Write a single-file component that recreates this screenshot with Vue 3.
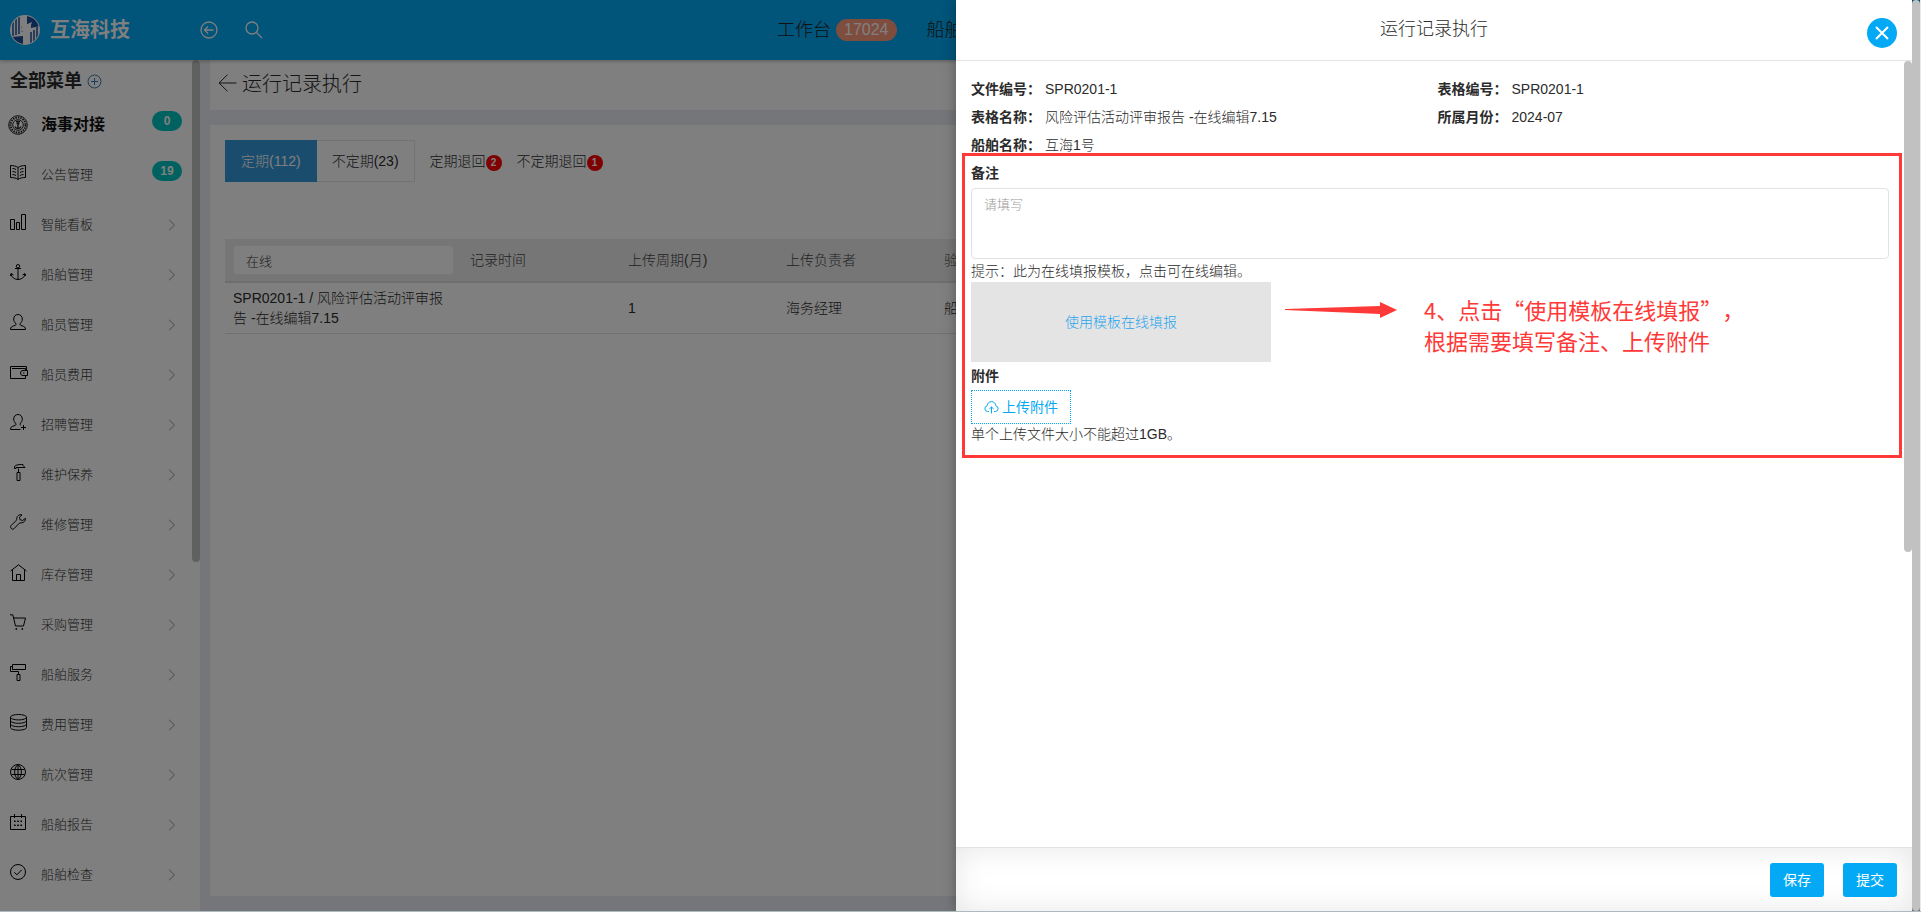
<script setup>
import { ref } from 'vue'

const icons = {
  book: 'M8 3.5C6 2 3 1.5.5 1.5v12c3 0 6 .5 7.500 2C9.500 14 12.500 13.500 15.500 13.500v-12C13 1.500 10 2 8 3.500zM8 3.500v12M2.500 4.500c1.500 0 2.500.5 3.500 1M2.500 7.500c1.500 0 2.500.5 3.500 1M2.500 10.500c1.500 0 2.500.5 3.500 1M13.500 4.500c-1.500 0-2.500.5-3.500 1M13.500 7.500c-1.500 0-2.500.5-3.500 1M13.500 10.500c-1.500 0-2.500.5-3.500 1',
  chart: 'M.5 5.500h4v10h-4zM6.500 8.500h3v7h-3zM11.500.5h4v15h-4z',
  anchor: 'M8 .5a1.700 1.700 0 1 0 0 3.400 1.700 1.700 0 0 0 0-3.400zM8 4v11.500M5 4.500h6M1 10c.5 3.300 3.500 5.500 7 5.500s6.500-2.200 7-5.500M.5 12l.5-2.500 2.500 1.500M15.500 12l-.5-2.500-2.500 1.500',
  user: 'M8 .5c-2.500 0-4.300 1.800-4.300 4.500 0 2 .8 3.500 2.300 4.700.3 1.300-.5 1.600-2 2.100C1.500 12.600.5 13.200.5 15.500h15c0-2.300-1-2.900-3.500-3.700-1.500-.5-2.300-.8-2-2.100 1.500-1.200 2.300-2.700 2.300-4.700C12.300 2.300 10.500.5 8 .5z',
  wallet: 'M.5 2.500h16v4M.5 2.500v12h15v-3M2 4.500h13.500v2M17.500 6.500H13a2.500 2.500 0 0 0 0 5h4.500zM13 9h1.500',
  recruit: 'M10.500 15.500H.5c0-2.300 1-2.900 3.500-3.700 1.500-.5 2.300-.8 2-2.100C4.500 8.500 3.700 7 3.700 5 3.700 2.300 5.500.5 8 .5s4.300 1.800 4.300 4.500c0 2-.8 3.500-2.300 4.700-.2.8 0 1.200.7 1.500M13.500 11v5M11 13.500h5',
  hammer: 'M4.500 2.500c2-2 5-2 7-2h1.500v1l2 2h-9v1h-1.500zM8.500 4.500v4M7 8.500h3v8H7z',
  wrench: 'M15.300 4.300 12.700 6.500 10 5.700 9.500 3.200 12 .8C9.500.2 7 1.500 6.700 4.500c0 1 0 1.500-.5 2L1 11.700c-1.400 1.700 1 4.800 3 3L9.200 9.300c.5-.5 1.200-.4 2-.4 3-.2 4.700-2.300 4.100-4.600z',
  home: 'M.5 7 8.500.8 16.500 7M2.500 5.500v11h12v-11M6.500 16.500v-6h4v6',
  cart: 'M0 .8h2.800L5.500 12h8L15.500 4h-12M6.300 14.200v1.600M5.500 15h1.600M12.300 14.200v1.600M11.500 15h1.600',
  roller: 'M2.500.5h13v5h-13zM2.500 2.500h-2v5h8v3M7 10.500h3v6H7z',
  coins: 'M8.500.5c4.500 0 8 1.200 8 2.700s-3.500 2.700-8 2.700-8-1.200-8-2.700 3.500-2.700 8-2.700zM.5 3.200v10.300c0 1.500 3.500 2.700 8 2.700s8-1.200 8-2.700V3.200M.5 6.600c0 1.500 3.500 2.700 8 2.700s8-1.200 8-2.700M.5 10c0 1.500 3.500 2.700 8 2.700s8-1.200 8-2.700',
  globe: 'M8 .5a7.500 7.500 0 1 0 0 15 7.500 7.500 0 0 0 0-15zM8 .5v15M8 .5c-4.500 3.500-4.500 11.500 0 15 4.500-3.500 4.500-11.500 0-15M1.500 5.500h13M1.500 10.500h13',
  calendar: 'M.5 2.500h15v13H.5zM4.500 0v4M11.500 0v4M4 7h1.500M7.300 7h1.500M10.500 7H12M4 11h1.500M7.300 11h1.500M10.500 11H12M4 7.500h1.500M7.300 7.500h1.500M10.500 7.500H12M4 11.500h1.500M7.300 11.500h1.500M10.500 11.500H12',
  check: 'M8 .5a7.500 7.500 0 1 0 0 15 7.500 7.500 0 0 0 0-15zM4.300 8.300 7 10.800l4.700-5',
}

const menu = [
  { label: '公告管理', icon: 'book', badge: 19 },
  { label: '智能看板', icon: 'chart' },
  { label: '船舶管理', icon: 'anchor' },
  { label: '船员管理', icon: 'user' },
  { label: '船员费用', icon: 'wallet' },
  { label: '招聘管理', icon: 'recruit' },
  { label: '维护保养', icon: 'hammer' },
  { label: '维修管理', icon: 'wrench' },
  { label: '库存管理', icon: 'home' },
  { label: '采购管理', icon: 'cart' },
  { label: '船舶服务', icon: 'roller' },
  { label: '费用管理', icon: 'coins' },
  { label: '航次管理', icon: 'globe' },
  { label: '船舶报告', icon: 'calendar' },
  { label: '船舶检查', icon: 'check' },
]

const info = [
  ['文件编号：', 'SPR0201-1'],
  ['表格编号：', 'SPR0201-1'],
  ['表格名称：', '风险评估活动评审报告 -在线编辑7.15'],
  ['所属月份：', '2024-07'],
  ['船舶名称：', '互海1号'],
]

const keyword = ref('在线')
const remark = ref('')
</script>

<template>
  <div class="app">
    <div class="screen">
      <header class="topbar">
        <a class="brand" href="#">
          <svg width="30" height="30" viewBox="0 0 30 30" aria-hidden="true">
            <defs><clipPath id="disc"><circle cx="15" cy="15" r="14" /></clipPath></defs>
            <circle cx="15" cy="15" r="15" fill="#fff" />
            <g clip-path="url(#disc)">
              <path d="M17 0H30V11L21 13V9L17 10z" fill="#1c4f9c" />
              <path d="M3 7v14M6 4v16M9 2v17M12 11v6" stroke="#1c4f9c" stroke-width="1.500" fill="none" />
              <path d="M21 17v12M24 15v12M27 12v13" stroke="#1c4f9c" stroke-width="1.500" fill="none" />
              <path d="M1 22l12-1v9H6z" fill="#1c4f9c" />
              <path d="M12 1h4l-1 9 7-3-2 6-9 4z" fill="#fff" />
            </g>
          </svg>
          <strong>互海科技</strong>
        </a>
        <div class="tools">
          <button type="button" aria-label="收起">
            <svg width="18" height="18" viewBox="0 0 18 18"><circle cx="9" cy="9" r="8" /><path d="M13.500 9h-9M8 5.500 4.500 9 8 12.500" /></svg>
          </button>
          <button type="button" aria-label="搜索">
            <svg width="18" height="18" viewBox="0 0 18 18"><circle cx="7" cy="7" r="6" /><path d="M11.500 11.500 17 17" /></svg>
          </button>
        </div>
        <nav class="topnav">
          <a href="#">工作台<span class="count">17024</span></a>
          <a href="#">船舶</a>
        </nav>
      </header>

      <div class="body">
        <aside class="sidebar">
          <h2>全部菜单
            <svg width="15" height="15" viewBox="0 0 15 15" aria-hidden="true"><circle cx="7.500" cy="7.500" r="6.500" /><path d="M4 7.500h7M7.500 4v7" /></svg>
          </h2>
          <a class="item major" href="#">
            <svg class="seal" width="20" height="20" viewBox="0 0 20 20" aria-hidden="true">
              <circle cx="10" cy="10" r="9.300" />
              <circle cx="10" cy="10" r="7.500" stroke-width="2" stroke-dasharray="1.500 1" />
              <circle cx="10" cy="10" r="5.300" />
              <path d="M8 6.500h4M10 6v7.500M7 11.500c.5 1.500 1.500 2 3 2s2.500-.5 3-2M8.500 8.500h3" stroke-width="1.400" />
            </svg>
            <span class="label">海事对接</span>
            <span class="pill">0</span>
          </a>
          <a v-for="m in menu" :key="m.label" class="item" href="#">
            <svg class="glyph" width="18" height="18" viewBox="0 0 18 18" aria-hidden="true"><path :d="icons[m.icon]" /></svg>
            <span class="label">{{ m.label }}</span>
            <span v-if="m.badge" class="pill">{{ m.badge }}</span>
            <svg v-else class="chev" width="8" height="12" viewBox="0 0 8 12" aria-hidden="true"><path d="M1 .7 6.500 6 1 11.300" /></svg>
          </a>
          <div class="thumb side-thumb"></div>
        </aside>

        <main class="main">
          <div class="page-head">
            <svg width="19" height="18" viewBox="0 0 19 18" aria-hidden="true"><path d="M18.500 9H1M9.500.7 1 9l8.500 8.300" /></svg>
            <h1>运行记录执行</h1>
          </div>
          <section class="card">
            <div class="tabs">
              <button type="button" class="tab active">定期(112)</button>
              <button type="button" class="tab">不定期(23)</button>
              <button type="button" class="plain">定期退回<span class="dot">2</span></button>
              <button type="button" class="plain">不定期退回<span class="dot">1</span></button>
            </div>
            <table>
              <colgroup><col class="wide"><col class="col"><col class="col"><col class="col"><col></colgroup>
              <thead>
                <tr>
                  <th><input v-model="keyword" type="text" aria-label="关键字"></th>
                  <th>记录时间</th>
                  <th>上传周期(月)</th>
                  <th>上传负责者</th>
                  <th>验收</th>
                </tr>
              </thead>
              <tbody>
                <tr>
                  <td>SPR0201-1 / 风险评估活动评审报告 -在线编辑7.15</td>
                  <td></td>
                  <td>1</td>
                  <td>海务经理</td>
                  <td>船长</td>
                </tr>
              </tbody>
            </table>
          </section>
        </main>
      </div>

      <div class="overlay">
        <section class="drawer" role="dialog" aria-labelledby="drawer-title">
          <header class="drawer-head">
            <h2 id="drawer-title">运行记录执行</h2>
            <button type="button" class="close" aria-label="关闭">
              <svg width="14" height="14" viewBox="0 0 14 14"><path d="M1 1l12 12M13 1 1 13" /></svg>
            </button>
          </header>

          <div class="drawer-body">
            <dl class="info">
              <div v-for="[k, v] in info" :key="k"><dt>{{ k }}</dt><dd>{{ v }}</dd></div>
            </dl>
            <div class="fields">
              <label class="caption" for="remark">备注</label>
              <textarea id="remark" v-model="remark" placeholder="请填写"></textarea>
              <p class="hint">提示：此为在线填报模板，点击可在线编辑。</p>
              <a class="template" href="#">使用模板在线填报</a>
              <div class="caption">附件</div>
              <button type="button" class="upload">
                <svg width="15" height="13" viewBox="0 0 15 13" aria-hidden="true"><path d="M5 10.500H3.500a2.900 2.900 0 0 1-.4-5.700C3.300 2.400 5.200.6 7.500.6s4.200 1.800 4.400 4.200a2.900 2.900 0 0 1-.4 5.700H10M7.500 12.500V6M5.300 8l2.200-2 2.200 2" /></svg>
                上传附件
              </button>
              <p class="note">单个上传文件大小不能超过1GB。</p>

              <div class="mark">
                <svg width="112" height="16" viewBox="0 0 112 16" aria-hidden="true"><path d="M0 7 95 4V0l17 8-17 8v-4L0 8z" /></svg>
                <p>4、点击“使用模板在线填报”，<br>根据需要填写备注、上传附件</p>
              </div>
            </div>
            <div class="thumb body-thumb"></div>
          </div>

          <footer class="drawer-foot">
            <button type="button">保存</button>
            <button type="button">提交</button>
          </footer>
        </section>
        <div class="track"><div class="thumb"></div></div>
      </div>
    </div>
  </div>
</template>

<style>
body { margin: 0; }
</style>

<style scoped>
* { box-sizing: border-box; }
h1, h2, p, dl, dd { margin: 0; }
a { color: inherit; text-decoration: none; }
button, input, textarea { font: inherit; color: inherit; }
button { padding: 0; border: 0; background: none; }
svg { flex: none; fill: none; stroke: currentColor; }

.app {
  height: 100vh;
  padding: 0 1px 1px 0;
  background: linear-gradient(to top, #afbabf 1px, #e8ebed 1px);
  font: 300 14px/20px "Liberation Sans", "Noto Sans CJK SC", sans-serif;
  color: #2b2b2b;
}
.screen { position: relative; display: flex; flex-direction: column; height: 100%; overflow: hidden; background: #e9edf3; }

.topbar { position: relative; z-index: 1; display: flex; align-items: center; flex: none; height: 60px; background: #03a9f4; box-shadow: 0 1px 4px rgba(0, 0, 0, .3); }
.brand { display: flex; align-items: center; gap: 10px; width: 200px; padding-left: 10px; color: #fff; }
.brand svg { stroke: none; }
.brand strong { font-size: 20px; font-weight: 700; }
.tools { display: flex; gap: 27px; width: 577px; color: #fff; }
.tools button { display: flex; color: #fff; }
.tools svg { stroke-width: 1.300; }
.topnav { display: flex; gap: 30px; font-size: 18px; color: #222; }
.topnav a { display: flex; align-items: center; gap: 5px; white-space: nowrap; }
.count { padding: 0 8px; border-radius: 11px; background: #ff9a7b; color: #fff; font-size: 16px; line-height: 22px; }

.body { display: flex; flex: 1; min-height: 0; }
.sidebar { position: relative; flex: none; width: 200px; padding-right: 8px; overflow: hidden; background: #fff; }
.sidebar h2 { display: flex; align-items: center; gap: 5px; height: 40px; padding: 2px 0 0 10px; font-size: 18px; font-weight: 700; }
.sidebar h2 svg { color: #3a7ab8; }
.item { display: flex; align-items: center; height: 50px; padding: 0 16px 0 10px; font-size: 13px; color: #333; }
.item .label { flex: 1; }
.glyph { margin: 0 13px 4px 0; color: #000; }
.major { padding-left: 8px; font-size: 16px; font-weight: 700; color: #111; }
.seal { margin-right: 13px; color: #222; }
.pill { width: 30px; margin: 0 -6px 8px 0; border-radius: 10px; background: #00c5c0; color: #fff; font-size: 12px; font-weight: 700; line-height: 20px; text-align: center; }
.chev { color: #999; }
.thumb { width: 8px; border-radius: 4px; background: #c1c1c1; }
.side-thumb { position: absolute; top: 0; right: 0; height: 59%; }

.main { display: flex; flex-direction: column; gap: 15px; flex: 1; min-width: 0; padding: 0 10px 15px; }
.page-head { display: flex; align-items: center; gap: 5px; flex: none; height: 50px; padding: 0 0 1px 8px; background: #fff; }
.page-head svg { margin-bottom: 4px; }
.page-head h1 { font-size: 20px; font-weight: 300; line-height: 29px; }
.card { flex: 1; padding: 15px; background: #fff; }
.tabs { display: flex; height: 42px; }
.tab { padding: 0 15px; border: 1px solid #e7e7e7; border-left: 0; }
.tab.active { padding: 0 16px; border: 0; background: #3598dc; color: #fff; }
.plain { display: flex; align-items: center; margin-left: 15px; }
.dot { width: 16px; height: 16px; margin-top: 3px; border-radius: 50%; background: #f00; color: #fff; font-size: 10px; font-weight: 700; line-height: 16px; text-align: center; }

table { width: 100%; margin-top: 57px; border-collapse: collapse; table-layout: fixed; }
.wide { width: 237px; }
.col { width: 158px; }
th, td { padding: 5px 8px; text-align: left; font-weight: 300; }
th { height: 43px; border-bottom: 2px solid #dcdcdc; background: #ededed; color: #444; }
td { height: 51px; border-bottom: 1px solid #e0e0e0; }
th input { display: block; width: 100%; height: 30px; padding: 0 12px; border: 1px solid #eee; border-radius: 4px; background: #fff; color: #333; font-size: 13px; }

.overlay { position: absolute; inset: 0; z-index: 2; display: grid; grid-template-columns: minmax(0, 1fr) 8px; justify-items: end; background: rgba(0, 0, 0, .5); }
.track { display: flex; }
.drawer { display: flex; flex-direction: column; width: 50%; min-height: 0; background: #fff; box-shadow: 0 0 12px rgba(0, 0, 0, .3); }
.drawer-head { display: grid; grid-template-columns: 1fr auto 1fr; flex: none; height: 61px; padding: 18px 15px 0; border-bottom: 1px solid #e4e4e4; }
.drawer-head h2 { grid-column: 2; font-size: 18px; font-weight: 300; line-height: 22px; }
.close { display: flex; align-items: center; justify-content: center; justify-self: end; width: 30px; height: 30px; border-radius: 50%; background: #03a9f4; color: #fff; }
.close svg { stroke-width: 2; }

.drawer-body { position: relative; flex: 1; min-height: 0; padding: 14px 23px 0 15px; }
.body-thumb { position: absolute; top: 0; right: 0; height: 491px; }
.info { display: grid; grid-template-columns: 1fr 1fr; column-gap: 15px; line-height: 28px; }
.info div { display: flex; gap: 4px; }
.info dt, .caption { font-weight: 700; }
.fields { position: relative; display: flex; flex-direction: column; align-items: flex-start; }
.caption { line-height: 28px; }
textarea { display: block; width: 100%; height: 71px; margin: 1px 0 0; padding: 6px 12px; border: 1px solid #dfe2e6; border-radius: 4px; font-size: 13px; resize: none; }
textarea::placeholder { color: #999; }
.hint { padding-top: 2px; line-height: 21px; }
.template { width: 300px; background: #e4e4e4; color: #2aa5ee; line-height: 80px; text-align: center; }
.upload { display: flex; align-items: center; gap: 3px; height: 34px; padding: 0 12px; border: 1px dotted #03a9f4; color: #03a9f4; font-weight: 400; }
.note { line-height: 21px; }

.mark { position: absolute; inset: -6px -13px -13px -9px; display: flex; align-items: flex-start; gap: 27px; padding: 138px 0 0 320px; border: 3px solid #ff3838; color: #ff3838; pointer-events: none; }
.mark svg { margin-top: 8px; fill: #ff3838; stroke: none; }
.mark p { font: 400 22px/31px "Noto Sans CJK SC", sans-serif; text-spacing-trim: space-all; }

.drawer-foot { display: flex; align-items: center; justify-content: flex-end; gap: 19px; flex: none; height: 64px; padding-right: 15px; border-top: 1px solid #e2e2e2; background: #fff; box-shadow: inset 0 0 30px rgba(0, 0, 0, .1); }
.drawer-foot button { width: 54px; height: 34px; border-radius: 3px; background: #03a9f4; color: #fff; font-weight: 400; }
</style>
